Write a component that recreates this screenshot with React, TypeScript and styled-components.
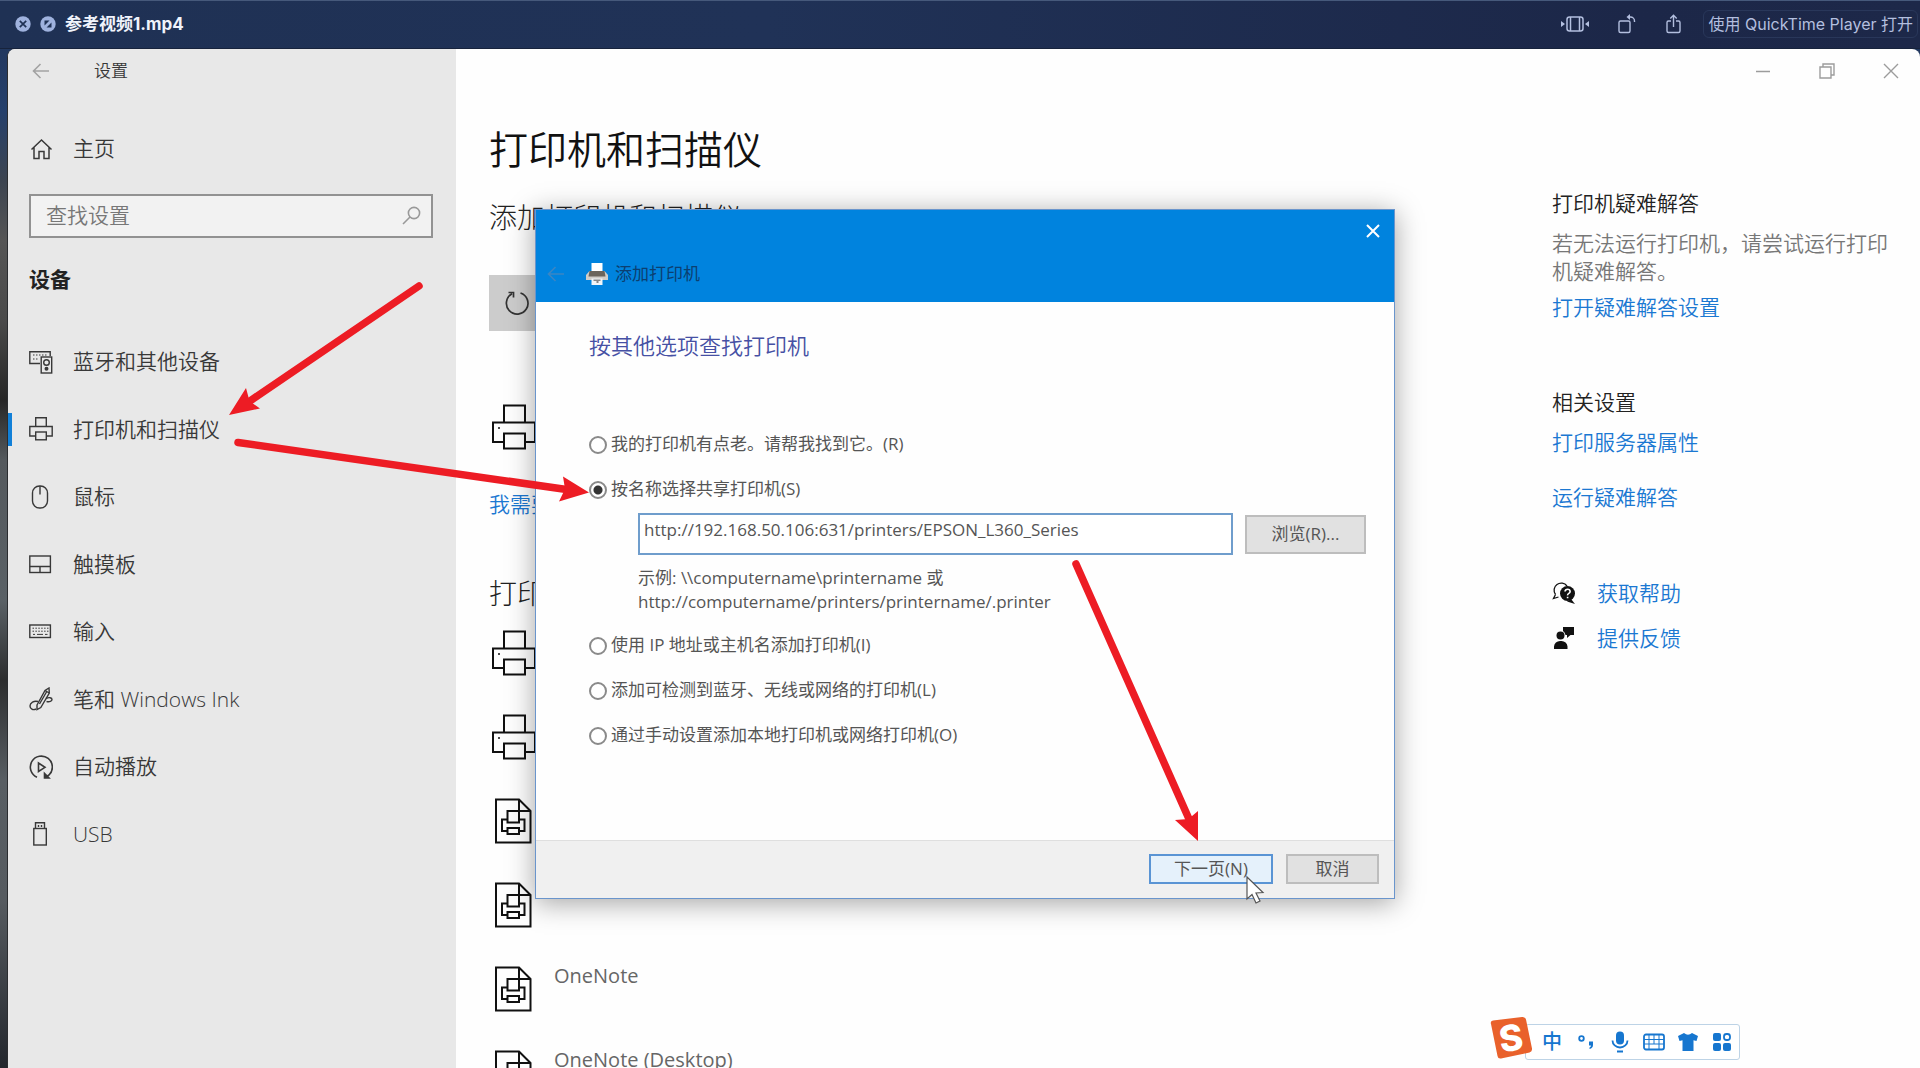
import React, { useState } from "react";
import styled, { createGlobalStyle } from "styled-components";

const GlobalStyle = createGlobalStyle`
  *, *::before, *::after { box-sizing: border-box; }
  body { margin: 0; }
  body, button, input {
    font-family: "Open Sans", "Noto Sans CJK SC", sans-serif;
  }
  body { font-weight: 350; }
  button, input { font-weight: 400; }
  h1, h2, h3, p, ul { margin: 0; padding: 0; font-weight: inherit; }
  ul { list-style: none; }
  a { text-decoration: none; color: inherit; }
  button { border: 0; padding: 0; background: none; color: inherit; }
  svg { display: block; flex: none; }
`;

const Screen = styled.div`
  position: relative;
  display: flex;
  flex-direction: column;
  height: 100vh;
  overflow: hidden;
  background:
    linear-gradient(90deg, #1f3154 0%, #203257 40%, #1c2748 85%, #1d2849 100%) top / 100% 49px no-repeat,
    linear-gradient(180deg, #1f3154 0, #25406c 110px, #3c4450 180px, #555 240px, #4a4a4a 320px, #262626 400px, #54595d 460px, #5a6166 600px, #2c2d2e 680px, #585e63 780px, #565b60 900px, #22262c 1068px);
`;

const PlayerBar = styled.header`
  display: flex;
  align-items: center;
  height: 49px;
  padding: 0 2px 2px 15px;
  border-top: 1px solid #46597b;
  border-bottom: 1px solid #17233c;
  color: #b3bfdf;
  font-family: Inter, "Noto Sans CJK SC", sans-serif;
`;

const RoundButton = styled.button`
  width: 16px;
  height: 16px;
  margin-right: 9px;
`;

const FileName = styled.h1`
  flex: 1;
  font-size: 17px;
  font-weight: 700;
  line-height: 24px;
  color: #f0f3fb;
`;

const PlayerTools = styled.div`
  display: flex;
  align-items: center;
  gap: 28px;
`;

const OpenWith = styled.button`
  height: 28px;
  margin-left: -8px;
  padding: 0 4px;
  border: 1px solid #29375a;
  border-radius: 6px;
  font-family: inherit;
  font-size: 16px;
  line-height: 24px;
  white-space: nowrap;
`;

const SettingsWindow = styled.div`
  position: relative;
  flex: 1;
  display: flex;
  min-height: 0;
  margin-left: 7px;
  border-left: 1px solid #2b2d30;
  border-radius: 8px 8px 0 0;
  overflow: hidden;
  background: #fefefe;
`;

const Sidebar = styled.aside`
  flex: none;
  width: 448px;
  background: #e8e8e8;
  color: #383838;
`;

const SidebarTitle = styled.div`
  display: flex;
  align-items: center;
  gap: 44px;
  height: 44px;
  padding-left: 24px;
  font-size: 17px;
  line-height: 24px;
`;

const NavLink = styled.a<{ $active?: boolean }>`
  display: flex;
  align-items: center;
  gap: 20px;
  padding-left: 17px;
  border-left: 4px solid ${(p) => (p.$active ? "#1180d8" : "transparent")};
  font-size: 21px;
  line-height: 33px;
`;

const HomeLink = styled(NavLink)`
  margin-top: 39px;
`;

const SearchBox = styled.label`
  display: flex;
  align-items: center;
  height: 44px;
  margin: 29px 23px 0 21px;
  padding: 0 10px 2px 15px;
  border: 2px solid #929292;
  background: #f2f2f2;
`;

const SearchInput = styled.input`
  flex: 1;
  min-width: 0;
  padding: 0;
  border: 0;
  background: none;
  font-size: 21px;
  font-weight: 350;
  line-height: 28px;
  &::placeholder { color: #777; opacity: 1; }
`;

const SidebarHeading = styled.h2`
  margin: 26px 0 34px 21px;
  font-size: 21px;
  font-weight: 700;
  line-height: 30px;
  color: #222;
`;

const NavList = styled.ul`
  display: grid;
  grid-auto-rows: 1fr;
  align-items: center;
  height: 540px;
`;

const Main = styled.main`
  flex: 1;
  min-width: 0;
`;

const WindowControls = styled.div`
  display: flex;
  justify-content: flex-end;
  gap: 6px;
  height: 43px;
`;

const ControlButton = styled.button`
  display: grid;
  place-items: center;
  width: 58px;
  color: #9c9c9c;
`;

const Columns = styled.div`
  display: flex;
  justify-content: space-between;
  padding-left: 33px;
`;

const PageTitle = styled.h1`
  margin-top: 31px;
  font-size: 39px;
  line-height: 52px;
  color: #111;
`;

const SectionTitle = styled.h2<{ $top: number }>`
  margin-top: ${(p) => p.$top}px;
  font-size: 28px;
  font-weight: 300;
  line-height: 36px;
  color: #222;
`;

const AddButton = styled.button`
  display: flex;
  align-items: center;
  width: 240px;
  height: 56px;
  margin-top: 40px;
  padding-left: 16px;
  background: #cccccc;
  color: #333;
`;

const DeviceList = styled.ul<{ $top?: number }>`
  margin-top: ${(p) => p.$top ?? 0}px;
`;

const Device = styled.li`
  display: flex;
  gap: 17px;
  align-items: center;
  height: 84px;
  color: #111;
`;

const DeviceName = styled.span`
  align-self: flex-start;
  padding-top: 14px;
  font-size: 20px;
  font-weight: 400;
  line-height: 30px;
  color: #666;
`;

const TextLink = styled.a<{ $top?: number }>`
  display: block;
  margin-top: ${(p) => p.$top ?? 0}px;
  font-size: 21px;
  line-height: 28px;
  color: #1b78d2;
`;

const Related = styled.aside`
  width: 368px;
  padding: 97px 24px 0 0;
`;

const RelatedTitle = styled.h3<{ $top?: number }>`
  margin-top: ${(p) => p.$top ?? 0}px;
  font-size: 21px;
  line-height: 28px;
  color: #222;
`;

const RelatedText = styled.p`
  margin: 12px 0 8px;
  font-size: 21px;
  line-height: 28px;
  color: #777;
`;

const SupportLink = styled.a<{ $top: number }>`
  display: flex;
  align-items: center;
  gap: 21px;
  margin-top: ${(p) => p.$top}px;
  font-size: 21px;
  line-height: 28px;
  color: #1b78d2;
`;

const Dialog = styled.section`
  position: absolute;
  left: 527px;
  top: 160px;
  width: 860px;
  border: 1px solid #6a95cc;
  background: #fefefe;
  box-shadow: 0 4px 26px rgba(0, 0, 0, 0.36);
  color: #555;
  font-size: 17px;
  font-weight: 400;
  line-height: 24px;
`;

const DialogHeader = styled.header`
  height: 92px;
  background: #0083de;
`;

const DialogCloseRow = styled.div`
  display: flex;
  justify-content: flex-end;
`;

const DialogClose = styled.button`
  display: grid;
  place-items: center;
  width: 42px;
  height: 42px;
  color: #fff;
`;

const DialogCaption = styled.div`
  display: flex;
  align-items: center;
  height: 44px;
  padding-left: 11px;
  color: #0c3f70;
`;

const CaptionPrinter = styled.span`
  margin: 0 6px 0 20px;
`;

const DialogBody = styled.form`
  padding: 28px 28px 0 53px;
`;

const DialogTitle = styled.h2`
  margin-bottom: 72px;
  font-size: 22px;
  font-weight: 350;
  line-height: 30px;
  color: #4650a4;
`;

const Option = styled.label`
  display: flex;
  align-items: center;
  gap: 4px;
  margin-bottom: 21px;
`;

const Radio = styled.input`
  appearance: none;
  width: 18px;
  height: 18px;
  margin: 2px 0 0;
  border: 2px solid #8a8a8a;
  border-radius: 50%;
  background: #fff;
  &:checked { background: radial-gradient(circle, #333 0 4px, #fff 5px); }
`;

const ShareFields = styled.div`
  margin: -9px 0 19px 49px;
`;

const AddressRow = styled.div`
  display: flex;
  align-items: center;
  gap: 12px;
  margin-bottom: 11px;
`;

const AddressInput = styled.input`
  flex: 1;
  min-width: 0;
  height: 42px;
  padding: 0 4px 10px;
  border: 2px solid #6f9dcc;
  background: #fff;
  color: #555;
  font-size: 17px;
  line-height: 24px;
`;

const PushButton = styled.button<{ $width: number; $tall?: boolean; $primary?: boolean }>`
  width: ${(p) => p.$width}px;
  height: ${(p) => (p.$tall ? 39 : 30)}px;
  border: ${(p) => (p.$primary ? "2px solid #5a94d4" : "2px solid #bdbdbd")};
  background: ${(p) => (p.$primary ? "#e5f1fb" : "#e1e1e1")};
  font-size: 17px;
  line-height: 24px;
`;

const DialogFooter = styled.footer`
  display: flex;
  justify-content: flex-end;
  gap: 13px;
  margin-top: 93px;
  padding: 13px 15px 14px;
  border-top: 1px solid #dfdfdf;
  background: #f0f0f0;
`;

const ImeBar = styled.div`
  position: absolute;
  right: 180px;
  bottom: 8px;
  display: flex;
  align-items: flex-end;
`;

const ImeTools = styled.div`
  display: flex;
  align-items: center;
  height: 36px;
  margin-left: -8px;
  padding: 0 0 0 9px;
  border: 1px solid #bdd3e6;
  border-radius: 3px;
  background: #fff;
  color: #1676cf;
`;

const ImeLogo = styled.span`
  position: relative;
  z-index: 1;
`;

const ImeButton = styled.button`
  display: grid;
  place-items: center;
  width: 34px;
  height: 34px;
  font-size: 20px;
  font-weight: 500;
  line-height: 24px;
`;

const Annotations = styled.svg`
  position: absolute;
  left: 0;
  top: 0;
  pointer-events: none;
`;

/* ---------- icons ---------- */

const Line = ({ size = 24, width = 1.4, children }: { size?: number; width?: number; children: React.ReactNode }) => (
  <svg width={size} height={size} viewBox="0 0 24 24" fill="none" stroke="currentColor" strokeWidth={width} aria-hidden="true">
    {children}
  </svg>
);

const BackArrow = ({ color }: { color: string }) => (
  <svg width="18" height="18" viewBox="0 0 18 18" fill="none" stroke={color} strokeWidth="1.6" aria-hidden="true">
    <path d="M17 9H1.5M8.5 2L1.5 9l7 7" />
  </svg>
);

const HomeIcon = () => (
  <Line width={1.5}>
    <path d="M2.5 12.5L12.5 3l10 9.500M5 10.500V21.500h5v-7h5v7h5V10.500" />
  </Line>
);

const DevicesIcon = () => (
  <Line>
    <path d="M11 13.500H.8V1.800h20.400V6" />
    <path d="M4 5h15M4 9h6" strokeDasharray="1.5 1.500" strokeWidth="1" />
    <rect x="12.200" y="7" width="10.500" height="16" />
    <circle cx="17.500" cy="12.500" r="2.800" />
    <circle cx="17.500" cy="18.800" r="1.300" fill="currentColor" />
  </Line>
);

const PrinterShapes = () => (
  <>
    <path d="M6.700 9.500V.8h10.600v8.700M6.500 19H.8V9.500h22.400V19h-5.700" />
    <rect x="6.700" y="15" width="10.600" height="7.800" />
  </>
);

const MouseIcon = () => (
  <Line>
    <rect x="3.500" y="1" width="15" height="22" rx="7" />
    <path d="M11 1v8.500" />
  </Line>
);

const TouchpadIcon = () => (
  <Line>
    <rect x=".8" y="4" width="20.600" height="16.500" />
    <path d="M.8 14.500h20.600M11 14.500v6" />
  </Line>
);

const KeyboardIcon = () => (
  <Line>
    <rect x=".8" y="5" width="20.600" height="12.500" />
    <path d="M3.500 8.200h16M3.500 11.200h16" strokeDasharray="1.500 1.400" strokeWidth="1" />
    <path d="M4 14.400h2M8 14.400h6M16 14.400h2.500" strokeWidth="1" />
  </Line>
);

const PenIcon = () => (
  <Line>
    <path d="M8 18L16 3.500 20 1l.3 5-8.500 14.500L8 22.500zM16 3.500L20.200 6M17.500 5L10.500 17" />
    <path d="M9 14.500c-4-1-8 1-8 4.500 0 3 3 4.500 6 3M17 11.500c3-1.500 6-1 6 1s-2.500 2.500-5.500 2" />
  </Line>
);

const AutoplayIcon = () => (
  <Line width={1.6}>
    <path d="M8 22.200A11 11 0 1 1 20 20L16 22.500" />
    <path d="M9.500 8v8.500l6.500-4.200z" />
    <path d="M15.500 18.500v4.500h4.500z" fill="currentColor" />
  </Line>
);

const UsbIcon = () => (
  <Line>
    <path d="M6.500 6.500V.8h9v5.700" />
    <path d="M9.500 3v2M12.500 3v2" />
    <rect x="4.800" y="6.500" width="12.500" height="16.500" />
  </Line>
);

const BigPrinter = () => (
  <svg width="48" height="48" viewBox="0 0 48 48" fill="none" stroke="currentColor" strokeWidth="2" aria-hidden="true">
    <path d="M15 19V2.500h21V19M15 39H4V19.500h42V39H36" />
    <rect x="15" y="30.500" width="21" height="15" />
    <circle cx="10" cy="25" r="1" fill="currentColor" stroke="none" />
  </svg>
);

const DocPrinter = () => (
  <svg width="48" height="48" viewBox="0 0 48 48" fill="none" stroke="currentColor" strokeWidth="2" aria-hidden="true">
    <path d="M7 2.500h23l11.500 11.500v31.500H7zM30 2.500V14h11.500" />
    <path d="M18.500 25.500V14H30v11.500zM18.500 34H13V22.500h5.500M30 22.500h5.500V34H30" />
    <rect x="18.500" y="31" width="11.500" height="6" />
  </svg>
);

const CaptionPrinterIcon = () => (
  <svg width="24" height="24" viewBox="0 0 24 24" aria-hidden="true">
    <path d="M1 18V13l3.500-4h15l3.500 4v5z" fill="#d0cdc8" />
    <path d="M6.500 1h11v8h-11z" fill="#fff" />
    <path d="M4.500 9h15l1 5.500h-17z" fill="#6b655c" />
    <path d="M6.500 16.500h11V23h-11z" fill="#f1f5f8" />
    <path d="M8.500 17.500h7v1.500h-2v2h-2v-2h-3z" fill="#888" />
  </svg>
);

const navItems = [
  { label: "蓝牙和其他设备", icon: <DevicesIcon /> },
  { label: "打印机和扫描仪", icon: <Line><PrinterShapes /></Line>, active: true },
  { label: "鼠标", icon: <MouseIcon /> },
  { label: "触摸板", icon: <TouchpadIcon /> },
  { label: "输入", icon: <KeyboardIcon /> },
  { label: "笔和 Windows Ink", icon: <PenIcon /> },
  { label: "自动播放", icon: <AutoplayIcon /> },
  { label: "USB", icon: <UsbIcon /> },
];

const devices = [
  { name: "", doc: false },
  { name: "", doc: false },
  { name: "", doc: true },
  { name: "", doc: true },
  { name: "OneNote", doc: true },
  { name: "OneNote (Desktop)", doc: true },
];

function Player() {
  return (
    <PlayerBar>
      <RoundButton aria-label="关闭">
        <svg width="16" height="16" viewBox="0 0 16 16">
          <circle cx="8" cy="8" r="7.700" fill="#9fb2de" />
          <path d="M4.800 4.800l6.400 6.400M11.200 4.800l-6.400 6.400" stroke="#1f3154" strokeWidth="1.700" />
        </svg>
      </RoundButton>
      <RoundButton aria-label="全屏">
        <svg width="16" height="16" viewBox="0 0 16 16">
          <circle cx="8" cy="8" r="7.700" fill="#9fb2de" />
          <path d="M4.500 9.500V4.500h5zM11.500 6.500v5h-5z" fill="#1f3154" />
          <path d="M4 12l8-8" stroke="#9fb2de" strokeWidth="1.200" />
        </svg>
      </RoundButton>
      <FileName>参考视频1.mp4</FileName>
      <PlayerTools>
        <button aria-label="修剪">
          <svg width="28" height="18" viewBox="0 0 28 18" fill="none" stroke="currentColor" strokeWidth="1.500">
            <rect x="6" y="2" width="16" height="14" rx="2.500" />
            <path d="M9.500 2v14M18.500 2v14" />
            <path d="M0 6l4 3-4 3zM28 6l-4 3 4 3z" fill="currentColor" stroke="none" />
          </svg>
        </button>
        <button aria-label="旋转">
          <svg width="20" height="20" viewBox="0 0 20 20" fill="none" stroke="currentColor" strokeWidth="1.400">
            <rect x="2" y="7" width="11" height="11.500" rx="1.500" />
            <path d="M11 3h2.500a4 4 0 0 1 4 4v1" />
            <path d="M13 0v6l-3.500-3z" fill="currentColor" stroke="none" />
          </svg>
        </button>
        <button aria-label="共享">
          <svg width="18" height="20" viewBox="0 0 18 20" fill="none" stroke="currentColor" strokeWidth="1.400">
            <path d="M6 7H3.500A1.500 1.500 0 0 0 2 8.500V17a1.500 1.500 0 0 0 1.500 1.500h10A1.500 1.500 0 0 0 15 17V8.500A1.500 1.500 0 0 0 13.500 7H11" />
            <path d="M8.500 13V1.500M5.300 4.500l3.200-3.200 3.200 3.200" />
          </svg>
        </button>
        <OpenWith>使用 QuickTime Player 打开</OpenWith>
      </PlayerTools>
    </PlayerBar>
  );
}

function SettingsSidebar() {
  return (
    <Sidebar>
      <SidebarTitle>
        <BackArrow color="#a2a2a2" />
        <span>设置</span>
      </SidebarTitle>
      <HomeLink href="#home">
        <HomeIcon />
        主页
      </HomeLink>
      <SearchBox>
        <SearchInput type="text" placeholder="查找设置" aria-label="查找设置" />
        <svg width="19" height="19" viewBox="0 0 19 19" fill="none" stroke="#999" strokeWidth="1.600" aria-hidden="true">
          <circle cx="12" cy="7" r="5.600" />
          <path d="M8 11l-7 7" />
        </svg>
      </SearchBox>
      <SidebarHeading>设备</SidebarHeading>
      <NavList>
        {navItems.map((item) => (
          <li key={item.label}>
            <NavLink href="#device" $active={item.active}>
              {item.icon}
              {item.label}
            </NavLink>
          </li>
        ))}
      </NavList>
    </Sidebar>
  );
}

function RelatedSettings() {
  return (
    <Related>
      <RelatedTitle>打印机疑难解答</RelatedTitle>
      <RelatedText>若无法运行打印机，请尝试运行打印机疑难解答。</RelatedText>
      <TextLink href="#troubleshoot">打开疑难解答设置</TextLink>
      <RelatedTitle $top={67}>相关设置</RelatedTitle>
      <TextLink href="#server" $top={12}>打印服务器属性</TextLink>
      <TextLink href="#run" $top={27}>运行疑难解答</TextLink>
      <SupportLink href="#help" $top={68}>
        <svg width="24" height="24" viewBox="0 0 24 24" aria-hidden="true">
          <path d="M3.500 13.500A7 7 0 1 1 15 5M3.500 13.500L1.500 17.500l5-1.500" fill="none" stroke="#111" strokeWidth="1.300" />
          <circle cx="15.500" cy="12.500" r="7.500" fill="#111" />
          <path d="M19 18l4 5-8-2.500z" fill="#111" />
          <path d="M13 10.500q.2-2.300 2.600-2.300t2.500 2.200q0 1.200-1.300 2t-1.200 2M15.600 15.800v1.500" fill="none" stroke="#fff" strokeWidth="1.600" />
        </svg>
        获取帮助
      </SupportLink>
      <SupportLink href="#feedback" $top={17}>
        <svg width="24" height="24" viewBox="0 0 24 24" fill="#111" aria-hidden="true">
          <circle cx="8.500" cy="9.500" r="4" />
          <path d="M2 23v-2.500a6 6 0 0 1 6-5.500h1.500a6 6 0 0 1 6 5.500V23zM11 1h11v8h-3.500l-3.500 3V9h-1.500A6 6 0 0 0 11 5z" />
        </svg>
        提供反馈
      </SupportLink>
    </Related>
  );
}

const optionLabels = {
  old: "我的打印机有点老。请帮我找到它。(R)",
  share: "按名称选择共享打印机(S)",
  ip: "使用 IP 地址或主机名添加打印机(I)",
  wireless: "添加可检测到蓝牙、无线或网络的打印机(L)",
  manual: "通过手动设置添加本地打印机或网络打印机(O)",
};

type OptionKey = keyof typeof optionLabels;

function AddPrinterDialog() {
  const [choice, setChoice] = useState<OptionKey>("share");
  const [address, setAddress] = useState("http://192.168.50.106:631/printers/EPSON_L360_Series");

  const option = (key: OptionKey) => (
    <Option>
      <Radio type="radio" name="method" checked={choice === key} onChange={() => setChoice(key)} />
      {optionLabels[key]}
    </Option>
  );

  return (
    <Dialog role="dialog" aria-label="添加打印机">
      <DialogHeader>
        <DialogCloseRow>
          <DialogClose aria-label="关闭">
            <svg width="14" height="14" viewBox="0 0 14 14" stroke="currentColor" strokeWidth="2">
              <path d="M1 1l12 12M13 1L1 13" />
            </svg>
          </DialogClose>
        </DialogCloseRow>
        <DialogCaption>
          <BackArrow color="#3a86c4" />
          <CaptionPrinter><CaptionPrinterIcon /></CaptionPrinter>
          添加打印机
        </DialogCaption>
      </DialogHeader>
      <DialogBody onSubmit={(e) => e.preventDefault()}>
        <DialogTitle>按其他选项查找打印机</DialogTitle>
        {option("old")}
        {option("share")}
        <ShareFields>
          <AddressRow>
            <AddressInput
              type="text"
              aria-label="打印机地址"
              value={address}
              onChange={(e) => setAddress(e.target.value)}
            />
            <PushButton type="button" $width={121} $tall>浏览(R)...</PushButton>
          </AddressRow>
          <p>示例: \\computername\printername 或</p>
          <p>http://computername/printers/printername/.printer</p>
        </ShareFields>
        {option("ip")}
        {option("wireless")}
        {option("manual")}
      </DialogBody>
      <DialogFooter>
        <PushButton type="button" $width={124} $primary>下一页(N)</PushButton>
        <PushButton type="button" $width={93}>取消</PushButton>
      </DialogFooter>
    </Dialog>
  );
}

function InputMethodBar() {
  return (
    <ImeBar>
      <ImeLogo>
        <svg width="44" height="44" viewBox="0 0 44 44" aria-hidden="true">
          <path d="M2 8Q1 5 4 4.500L33 1q3-.5 4 2.500l6 29q.5 3-2.500 4L12 42.500q-3 .5-3.500-2.500z" fill="#e9612b" />
          <text x="22" y="35" fontFamily="Inter" fontSize="36" fontWeight="800" fill="#fff" textAnchor="middle" transform="rotate(-8 22 22)">S</text>
        </svg>
      </ImeLogo>
      <ImeTools>
        <ImeButton>中</ImeButton>
        <ImeButton aria-label="标点">
          <svg width="18" height="18" viewBox="0 0 18 18" fill="none" stroke="currentColor" strokeWidth="1.800">
            <circle cx="4.500" cy="5.500" r="2.300" />
            <path d="M12 8.500h4v3.500q0 3-3.500 4v-1.500q1.500-.5 1.500-2H12z" fill="currentColor" stroke="none" />
          </svg>
        </ImeButton>
        <ImeButton aria-label="语音">
          <svg width="18" height="22" viewBox="0 0 18 22" fill="none" stroke="currentColor" strokeWidth="1.800">
            <rect x="5" y=".5" width="8" height="13" rx="4" fill="currentColor" stroke="none" />
            <path d="M1.500 9.500a7.500 7 0 0 0 15 0M6 20.500h6" />
          </svg>
        </ImeButton>
        <ImeButton aria-label="键盘">
          <svg width="22" height="18" viewBox="0 0 22 18" fill="none" stroke="currentColor" strokeWidth="1.800">
            <rect x="1" y="1.500" width="20" height="15" rx="2" />
            <path d="M1 6.500h20M1 11h20M6 2v14M11 2v9M16 2v14" strokeWidth="1" />
          </svg>
        </ImeButton>
        <ImeButton aria-label="皮肤">
          <svg width="22" height="20" viewBox="0 0 22 20" fill="currentColor">
            <path d="M7 1q4 3.500 8 0l6 3-1.500 5-3-.8V19h-11V8.200l-3 .8L1 4z" />
          </svg>
        </ImeButton>
        <ImeButton aria-label="工具箱">
          <svg width="20" height="20" viewBox="0 0 20 20" fill="currentColor">
            <rect x="1" y="1" width="8" height="8" rx="2" />
            <rect x="1" y="11" width="8" height="8" rx="2" />
            <rect x="11" y="11" width="8" height="8" rx="2" />
            <rect x="12" y="2" width="6" height="6" rx="2.500" fill="none" stroke="currentColor" strokeWidth="1.800" />
          </svg>
        </ImeButton>
      </ImeTools>
    </ImeBar>
  );
}

function Arrows() {
  return (
    <Annotations width="1920" height="1068" viewBox="0 0 1920 1068" aria-hidden="true">
      <g stroke="#ed1c24" strokeWidth="7.500" strokeLinecap="round" fill="#ed1c24">
        <path d="M419 286L247 403M238 442.500L570 490M1076 564L1189 819" />
        <path d="M229 415l17-27 3.500 13 10.500 7.500zM589 492.500l-26-16 2 12.500-6 12.500zM1198 841v-30l-9.500 8-13.500 1z" stroke="none" />
      </g>
      <path d="M1247 877v22l5-4.500 4 8.500 4-2-4-8 7-.5z" fill="#fff" stroke="#555" strokeWidth="1.200" />
    </Annotations>
  );
}

export default function App() {
  return (
    <Screen>
      <GlobalStyle />
      <Player />
      <SettingsWindow>
        <SettingsSidebar />
        <Main>
          <WindowControls>
            <ControlButton aria-label="最小化">
              <svg width="14" height="14" viewBox="0 0 14 14" stroke="currentColor" strokeWidth="1.300"><path d="M0 7.500h14" /></svg>
            </ControlButton>
            <ControlButton aria-label="还原">
              <svg width="16" height="16" viewBox="0 0 16 16" fill="none" stroke="currentColor" strokeWidth="1.400">
                <path d="M1 4h11v11H1zM4 4V1h11v11h-3" />
              </svg>
            </ControlButton>
            <ControlButton aria-label="关闭">
              <svg width="16" height="16" viewBox="0 0 16 16" stroke="currentColor" strokeWidth="1.400"><path d="M1 1l14 14M15 1L1 15" /></svg>
            </ControlButton>
          </WindowControls>
          <Columns>
            <div>
              <PageTitle>打印机和扫描仪</PageTitle>
              <SectionTitle $top={24}>添加打印机和扫描仪</SectionTitle>
              <AddButton aria-label="添加打印机或扫描仪">
                <svg width="24" height="24" viewBox="0 0 24 24" fill="none" stroke="currentColor" strokeWidth="1.700">
                  <path d="M15.500 2A10.800 10.800 0 1 1 7 2.800M3.500 1.500h5v5" />
                </svg>
              </AddButton>
              <DeviceList $top={54}>
                <Device><BigPrinter /></Device>
              </DeviceList>
              <TextLink href="#missing" $top={21}>我需要</TextLink>
              <SectionTitle $top={57}>打印</SectionTitle>
              <DeviceList>
                {devices.map((d, i) => (
                  <Device key={i}>
                    {d.doc ? <DocPrinter /> : <BigPrinter />}
                    {d.name && <DeviceName>{d.name}</DeviceName>}
                  </Device>
                ))}
              </DeviceList>
            </div>
            <RelatedSettings />
          </Columns>
        </Main>
        <AddPrinterDialog />
        <InputMethodBar />
      </SettingsWindow>
      <Arrows />
    </Screen>
  );
}
